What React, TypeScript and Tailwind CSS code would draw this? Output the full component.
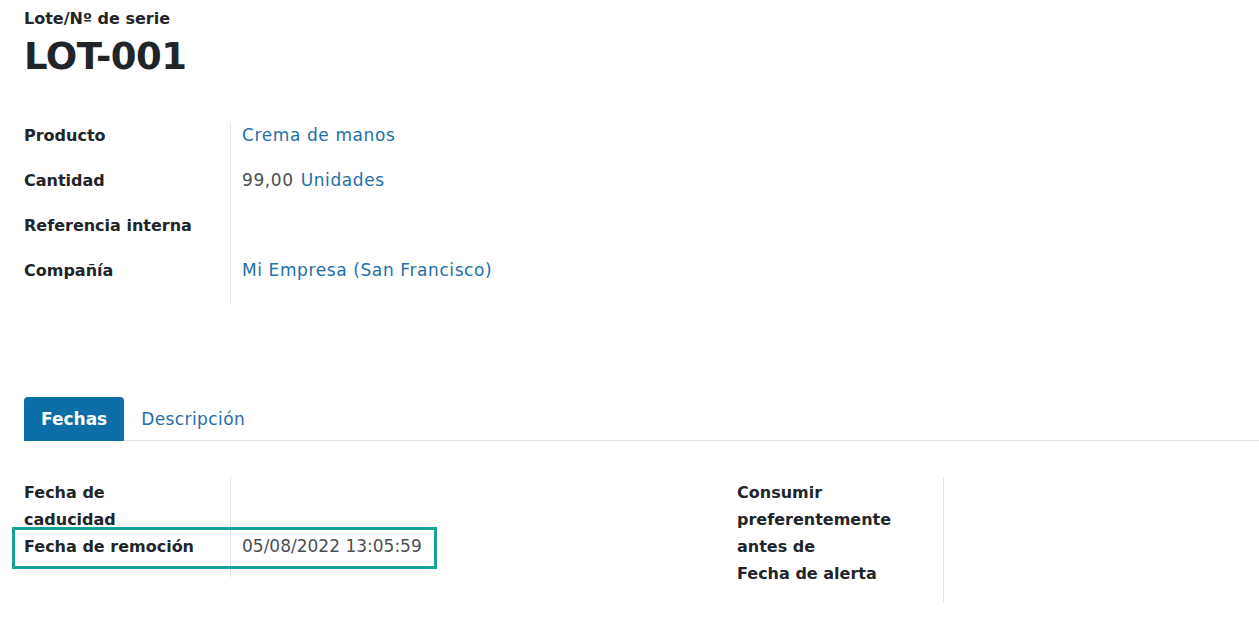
import React from "react";

const font = { fontFamily: '"DejaVu Sans", "Open Sans", sans-serif' };

function Field({ label, children }: { label: React.ReactNode; children?: React.ReactNode }) {
  return (
    <div className="flex">
      <div className="w-[206px] shrink-0 pr-2 font-semibold text-[#212529]">{label}</div>
      <div className="flex-1 pl-3 text-[17px] tracking-[0.6px] text-[#4a4f54]">{children}</div>
    </div>
  );
}

export default function App() {
  return (
    <div className="min-h-[623px] w-[1259px] bg-white text-[16px] text-[#212529]" style={font}>
      <div className="pl-6 pt-[8px]">
        <div className="text-[16px] font-semibold leading-[22px]">Lote/Nº de serie</div>
        <h1 className="mt-[4px] text-[37px] font-semibold leading-[46px] tracking-[-0.5px]">LOT-001</h1>
      </div>

      <div className="relative mt-[30px] pl-6">
        <div className="absolute left-[230px] top-[13px] h-[180px] w-px bg-[#dee2e6]" />
        <div className="flex flex-col gap-[22px] pt-[14px] leading-[23px]">
          <Field label="Producto">
            <span className="text-[#1f6fa8]">Crema de manos</span>
          </Field>
          <Field label="Cantidad">
            <span>99,00</span>
            <span className="ml-[7px] text-[#1f6fa8]">Unidades</span>
          </Field>
          <Field label="Referencia interna" />
          <Field label="Compañía">
            <span className="text-[#1f6fa8]">Mi Empresa (San Francisco)</span>
          </Field>
        </div>
      </div>

      <div className="mt-[115px] flex pl-6">
        <div className="flex h-[44px] items-center rounded-t-[4px] bg-[#0c6ea6] px-[17px] pt-[2px] text-[17px] font-semibold text-white">
          Fechas
        </div>
        <div className="flex flex-1 items-center border-b border-[#dee2e6] pl-[17px] pt-[3px] text-[17px] tracking-[0.4px] text-[#1f6fa8]">
          Descripción
        </div>
      </div>

      <div className="mt-[36px] flex pl-6">
        <div className="relative w-[713px]">
          <div className="absolute left-[206px] top-0 h-[100px] w-px bg-[#dee2e6]" />
          <div className="pt-[2px] leading-[27px]">
            <div className="w-[150px] font-semibold">Fecha de caducidad</div>
            <div className="relative flex">
              <div className="absolute -left-[12px] -top-[6px] h-[42px] w-[425px] border-[3px] border-[#14a39c]" />
              <div className="w-[206px] font-semibold">Fecha de remoción</div>
              <div className="pl-3 text-[17px] text-[#4a4f54]">05/08/2022 13:05:59</div>
            </div>
          </div>
        </div>
        <div className="relative w-[206px]">
          <div className="absolute left-[206px] top-0 h-[126px] w-px bg-[#dee2e6]" />
          <div className="w-[170px] pt-[2px] font-semibold leading-[27px]">
            <div>Consumir preferentemente antes de</div>
            <div>Fecha de alerta</div>
          </div>
        </div>
      </div>
    </div>
  );
}
